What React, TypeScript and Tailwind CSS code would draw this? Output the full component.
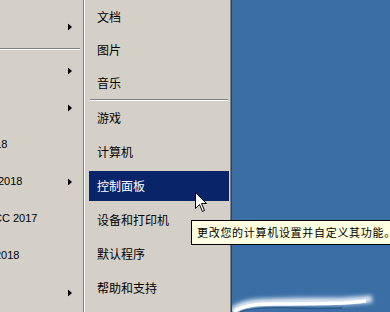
import React from "react";

const cjk = { fontFamily: '"Noto Sans CJK SC", "Noto Sans", sans-serif' };
const lat = { fontFamily: '"Liberation Sans", Arial, sans-serif' };

function Arrow() {
  return (
    <svg width="4" height="7" viewBox="0 0 4 7" className="block">
      <path d="M0 0 L4 3.5 L0 7 Z" fill="#000" />
    </svg>
  );
}

function LeftRow({ text, ml, arrow }: { text?: string; ml?: string; arrow?: boolean }) {
  return (
    <div className="h-[37px] flex items-center relative">
      {text ? (
        <span className={`text-[11px] text-black whitespace-nowrap ${ml ?? ""}`} style={lat}>
          {text}
        </span>
      ) : null}
      {arrow ? (
        <div className="absolute left-[68px] top-1/2 -translate-y-1/2">
          <Arrow />
        </div>
      ) : null}
    </div>
  );
}

function Item({ label, h, active }: { label: string; h: string; active?: boolean }) {
  return (
    <div className={`${h} flex items-center`}>
      <div
        className={`flex-1 h-[30px] ml-[4px] mr-[1px] flex items-center pl-[8px] text-[12px] ${
          active ? "bg-[#0a246a] text-white" : "text-black"
        }`}
        style={cjk}
      >
        {label}
      </div>
    </div>
  );
}

export default function App() {
  return (
    <div className="w-[390px] h-[312px] flex overflow-hidden relative bg-[#3a6ea5]">
      {/* left column */}
      <div className="w-[83px] h-full bg-[#d4d0c8] flex flex-col pt-[8px] overflow-hidden">
        <LeftRow arrow />
        <div className="h-[7px] flex flex-col justify-center mr-[3px]">
          <div className="h-px bg-[#808080]" />
          <div className="h-px bg-white" />
        </div>
        <LeftRow arrow />
        <LeftRow arrow />
        <LeftRow text="2018" ml="ml-[-17px]" />
        <LeftRow text="2018" ml="ml-[-2px]" arrow />
        <LeftRow text="CC 2017" ml="ml-[-6px]" />
        <LeftRow text="2018" ml="ml-[-5px]" />
        <LeftRow arrow />
      </div>
      <div className="w-px h-full bg-[#808080]" />
      <div className="w-px h-full bg-white" />

      {/* right column */}
      <div className="w-[145px] h-full bg-[#d4d0c8] flex flex-col">
        <Item label="文档" h="h-[33px]" />
        <Item label="图片" h="h-[33px]" />
        <Item label="音乐" h="h-[33px]" />
        <div className="h-[2px] flex flex-col ml-[5px] mr-[2px]">
          <div className="h-px bg-[#808080]" />
          <div className="h-px bg-white" />
        </div>
        <Item label="游戏" h="h-[34px]" />
        <Item label="计算机" h="h-[34px]" />
        <Item label="控制面板" h="h-[34px]" active />
        <Item label="设备和打印机" h="h-[34px]" />
        <Item label="默认程序" h="h-[34px]" />
        <Item label="帮助和支持" h="h-[34px]" />
      </div>
      <div className="w-px h-full bg-[#808080]" />
      <div className="w-px h-full bg-[#404040]" />

      {/* desktop */}
      <div className="flex-1 h-full bg-[#3a6ea5] relative">
        <svg
          className="absolute left-0 bottom-0"
          width="158"
          height="22"
          viewBox="0 0 158 22"
        >
          <defs>
            <filter id="b1" x="-20%" y="-200%" width="140%" height="500%">
              <feGaussianBlur stdDeviation="2" />
            </filter>
            <filter id="b2" x="-20%" y="-200%" width="140%" height="500%">
              <feGaussianBlur stdDeviation="0.7" />
            </filter>
          </defs>
          <path
            d="M0 22 Q8 12 40 12 Q80 11 112 11 Q130 10 140 9"
            stroke="#e6eef8"
            strokeWidth="7"
            fill="none"
            filter="url(#b1)"
          />
          <path
            d="M2 22 Q12 14 40 14 Q80 14 112 13 Q126 12 134 11"
            stroke="#ffffff"
            strokeWidth="3.5"
            fill="none"
            filter="url(#b2)"
          />
          <path d="M8 22 Q22 17 60 18 Q90 19 110 18" stroke="#2c5a8a" strokeWidth="1.5" fill="none" filter="url(#b2)" />
        </svg>
      </div>

      {/* cursor */}
      <svg
        className="absolute left-[195px] top-[192px]"
        width="13"
        height="21"
        viewBox="0 0 13 21"
      >
        <path
          d="M0.5 0.5 L0.5 16.5 L4.5 12.5 L7.5 19.5 L9.5 18.5 L6.5 11.5 L11.5 11.5 Z"
          fill="#ffffff"
          stroke="#000000"
          strokeWidth="1"
          strokeLinejoin="miter"
        />
      </svg>

      {/* tooltip */}
      <div className="absolute left-[191px] top-[220px] h-[25px] w-[215px] bg-[#ffffe1] border border-black flex items-center pl-[5px]">
        <span className="text-[11px] tracking-[0.7px] text-black whitespace-nowrap" style={cjk}>
          更改您的计算机设置并自定义其功能。
        </span>
      </div>
    </div>
  );
}
